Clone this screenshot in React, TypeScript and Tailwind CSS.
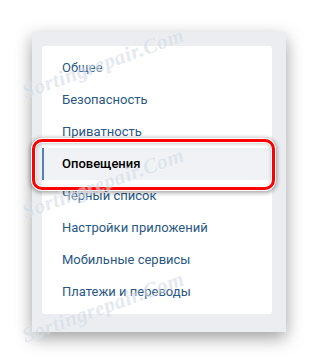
import React from "react";

const items = [
  "Общее",
  "Безопасность",
  "Приватность",
  "Оповещения",
  "Чёрный список",
  "Настройки приложений",
  "Мобильные сервисы",
  "Платежи и переводы",
];

const ACTIVE = 3;

function Watermark({ top, left }: { top: number; left: number }) {
  return (
    <div
      className="pointer-events-none absolute -rotate-[20deg] whitespace-nowrap text-[21px] font-bold italic tracking-wide text-[#d3dbe6] opacity-60 [font-family:'Liberation_Serif',serif] [text-shadow:0_0_2px_#fff]"
      style={{ top, left }}
    >
      Sortingrepair.Com
    </div>
  );
}

export default function App() {
  return (
    <div className="relative h-[364px] w-[318px] overflow-hidden bg-white [font-family:Roboto,'Noto_Sans',sans-serif]">
      <div className="pl-8 pt-8">
        <div className="relative w-[254px] bg-[#ebedf0] pb-[18px] pl-[10px] pr-[14px] pt-[14px] shadow-[0_6px_16px_rgba(0,0,0,0.38)]">
          <div className="flex flex-col rounded-[3px] bg-white py-[6px]">
            {items.map((label, i) => (
              <div
                key={label}
                className={
                  i === ACTIVE
                    ? "flex h-8 items-center border-l-2 border-[#5181b8] bg-[#f0f2f5] pl-[18px] text-[13px] font-medium text-black"
                    : "flex h-8 items-center pl-5 text-[13px] text-[#2a5885]"
                }
              >
                {label}
              </div>
            ))}
          </div>

          <div className="pointer-events-none absolute left-0 top-[107px] h-[51px] w-[243px] rounded-[10px] border-[3px] border-[#ff0000] shadow-[0_0_0_1px_#fff,0_1px_4px_2px_rgba(0,0,0,0.35),inset_0_0_0_1px_#fff,inset_0_1px_4px_rgba(0,0,0,0.3)]" />
        </div>
      </div>

      <Watermark top={48} left={18} />
      <Watermark top={168} left={18} />
      <Watermark top={292} left={18} />
    </div>
  );
}
